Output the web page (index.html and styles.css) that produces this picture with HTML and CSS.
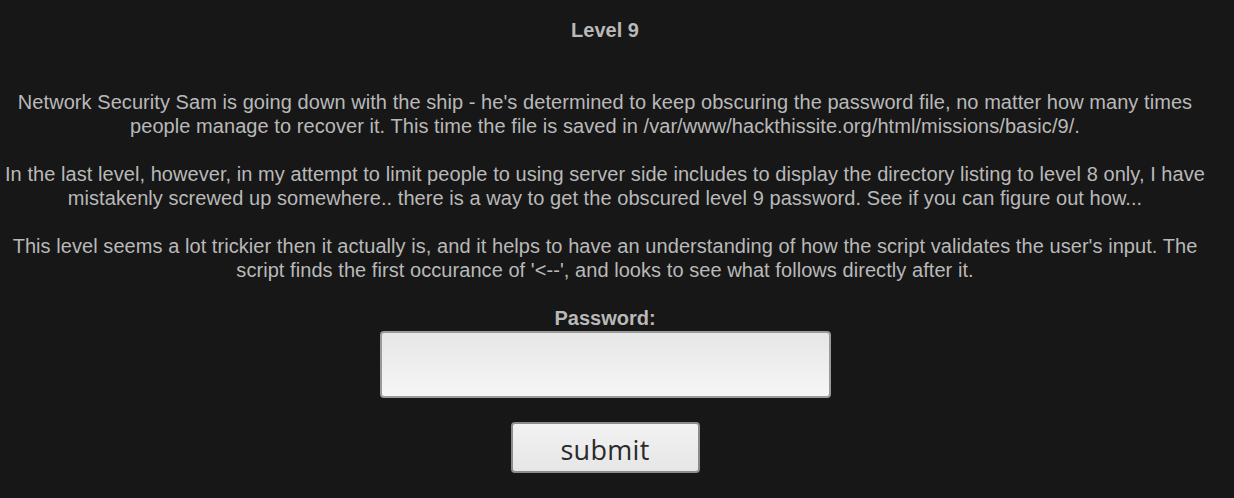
FILE: index.html
```html
<!DOCTYPE html>
<html>
<head>
<meta charset="utf-8">
<link rel="stylesheet" href="styles.css">
</head>
<body>
<div class="page">
  <h1 class="title">Level 9</h1>
  <p class="para">Network Security Sam is going down with the ship - he's determined to keep obscuring the password file, no matter how many times people manage to recover it. This time the file is saved in /var/www/hackthissite.org/html/missions/basic/9/.</p>
  <p class="para">In the last level, however, in my attempt to limit people to using server side includes to display the directory listing to level 8 only, I have mistakenly screwed up somewhere.. there is a way to get the obscured level 9 password. See if you can figure out how...</p>
  <p class="para">This level seems a lot trickier then it actually is, and it helps to have an understanding of how the script validates the user's input. The script finds the first occurance of '&lt;--', and looks to see what follows directly after it.</p>
  <form class="form">
    <label class="label">Password:</label>
    <input class="field" type="password">
    <button class="submit" type="button">submit</button>
  </form>
</div>
</body>
</html>
```
FILE: styles.css
```css
html, body {
  margin: 0;
  padding: 0;
  background: #171717;
}
.page {
  width: 1210px;
  font-family: "Liberation Sans", Arial, sans-serif;
  color: #b9b9b9;
  text-align: center;
  font-size: 20px;
  line-height: 24px;
}
.title {
  margin: 0;
  padding-top: 18px;
  font-size: 20px;
  line-height: 24px;
  font-weight: bold;
}
.para {
  margin: 24px 0 0;
  letter-spacing: 0.06px;
}
.para:first-of-type {
  margin-top: 48px;
}
.form {
  margin-top: 24px;
  display: flex;
  flex-direction: column;
  align-items: center;
}
.label {
  font-weight: bold;
  line-height: 24px;
  margin-bottom: 1px;
}
.field {
  box-sizing: border-box;
  width: 451px;
  height: 67px;
  border: 2px solid #9a9a9a;
  border-radius: 4px;
  background: linear-gradient(#e6e6e6, #f6f6f6);
  margin: 0;
}
.submit {
  box-sizing: border-box;
  margin-top: 24px;
  width: 189px;
  height: 51px;
  border: 2px solid #8c8c8c;
  border-radius: 4px;
  background: linear-gradient(#f2f2f2, #e6e6e6);
  font-family: "Open Sans", "Noto Sans", sans-serif;
  font-size: 27px;
  letter-spacing: 0.3px;
  color: #2a2a2a;
  padding: 3px 0 0;
}
```
